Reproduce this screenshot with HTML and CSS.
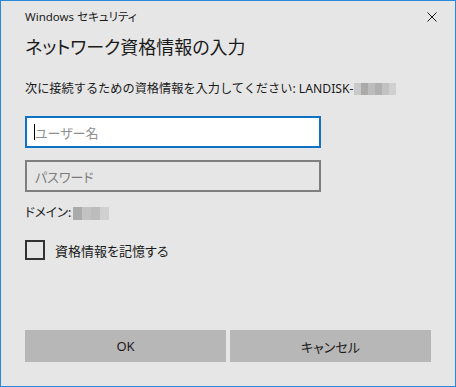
FILE: index.html
```html
<!DOCTYPE html>
<html lang="ja">
<head>
<meta charset="utf-8">
<title>Windows セキュリティ</title>
<link rel="stylesheet" href="styles.css">
</head>
<body>
<div class="window">
  <div class="titlebar">
    <span class="title">Windows セキュリティ</span>
    <span class="close" aria-label="閉じる">
      <svg width="10" height="10" viewBox="0 0 10 10"><path d="M0.5 0.5L9.5 9.5M9.5 0.5L0.5 9.5" stroke="#1a1a1a" stroke-width="1" fill="none"/></svg>
    </span>
  </div>
  <h1 class="heading">ネットワーク資格情報の入力</h1>
  <p class="desc">次に接続するための資格情報を入力してください: LANDISK-<span class="blur blur-host"><i class="b1"></i><i class="b2"></i><i class="b3"></i><i class="b4"></i><i class="b5"></i><i class="b6"></i></span></p>
  <div class="field focused"><span class="caret"></span><span class="placeholder">ユーザー名</span></div>
  <div class="field"><span class="placeholder pw">パスワード</span></div>
  <p class="domain">ドメイン:<span class="blur blur-domain"><i class="b2"></i><i class="b5"></i><i class="b3"></i><i class="b6"></i></span></p>
  <label class="remember"><span class="checkbox"></span><span class="remember-text">資格情報を記憶する</span></label>
  <div class="buttons">
    <button class="btn">OK</button>
    <button class="btn">キャンセル</button>
  </div>
</div>
</body>
</html>
```
FILE: styles.css
```css
html, body {
  margin: 0;
  padding: 0;
}
body {
  width: 456px;
  height: 387px;
  font-family: "Noto Sans", "Noto Sans CJK JP", sans-serif;
  font-feature-settings: "palt";
  color: #000;
}
.window {
  box-sizing: border-box;
  width: 456px;
  height: 387px;
  border: 1px solid #2a89d8;
  background: #e6e6e6;
  padding: 0 24px;
  display: flex;
  flex-direction: column;
}
.titlebar {
  height: 32px;
  display: flex;
  align-items: center;
  justify-content: space-between;
  margin-right: -24px;
}
.title {
  font-size: 11.5px;
  line-height: 16px;
  color: #1a1a1a;
}
.close {
  width: 46px;
  height: 32px;
  display: flex;
  align-items: center;
  justify-content: center;
}
.heading {
  margin: 0;
  font-size: 18px;
  line-height: 28px;
  font-weight: 400;
  color: #1a1a1a;
}
.desc {
  margin: 19px 0 0;
  font-size: 12.2px;
  font-feature-settings: normal;
  line-height: 18px;
  color: #1a1a1a;
  display: flex;
  align-items: center;
  white-space: nowrap;
}
.latin {
  font-size: 13px;
}
.blur {
  display: inline-flex;
  height: 12px;
}
.blur i {
  display: block;
  width: 7px;
  height: 12px;
}
.blur-host { margin-left: 1px; }
.blur-domain { margin-left: 2px; height: 13px; }
.blur-domain i { width: 9px; height: 13px; }
.b1 { background: #c9c9c9; }
.b2 { background: #aaaaaa; }
.b3 { background: #bcbcbc; }
.b4 { background: #b0b0b0; }
.b5 { background: #c2c2c2; }
.b6 { background: #d0d0d0; }
.field {
  box-sizing: border-box;
  width: 296px;
  height: 32px;
  margin-top: 12px;
  border: 2px solid #7f7f7f;
  display: flex;
  align-items: center;
  padding-left: 8px;
}
.field.focused {
  margin-top: 18px;
  border-color: #0f72c4;
  background: #fff;
}
.caret {
  width: 1px;
  height: 16px;
  background: #000;
  margin-left: -1px;
}
.placeholder {
  font-size: 13px;
  color: #8f8f8f;
}
.placeholder.pw {
  color: #7c7c7c;
}
.domain {
  margin: 12px 0 0;
  font-size: 12.5px;
  line-height: 18px;
  color: #1a1a1a;
  display: flex;
  align-items: center;
}
.remember {
  margin-top: 18px;
  display: flex;
  align-items: center;
  gap: 10px;
  height: 20px;
}
.checkbox {
  box-sizing: border-box;
  width: 20px;
  height: 20px;
  border: 2px solid #333;
}
.remember-text {
  font-size: 13px;
  color: #1a1a1a;
}
.buttons {
  margin-top: 70px;
  display: flex;
  gap: 4px;
}
.btn {
  flex: 1;
  height: 32px;
  border: none;
  background: #b7b7b7;
  font-family: inherit;
  font-feature-settings: "palt";
  font-size: 13px;
  color: #1a1a1a;
  padding: 0;
}
```
